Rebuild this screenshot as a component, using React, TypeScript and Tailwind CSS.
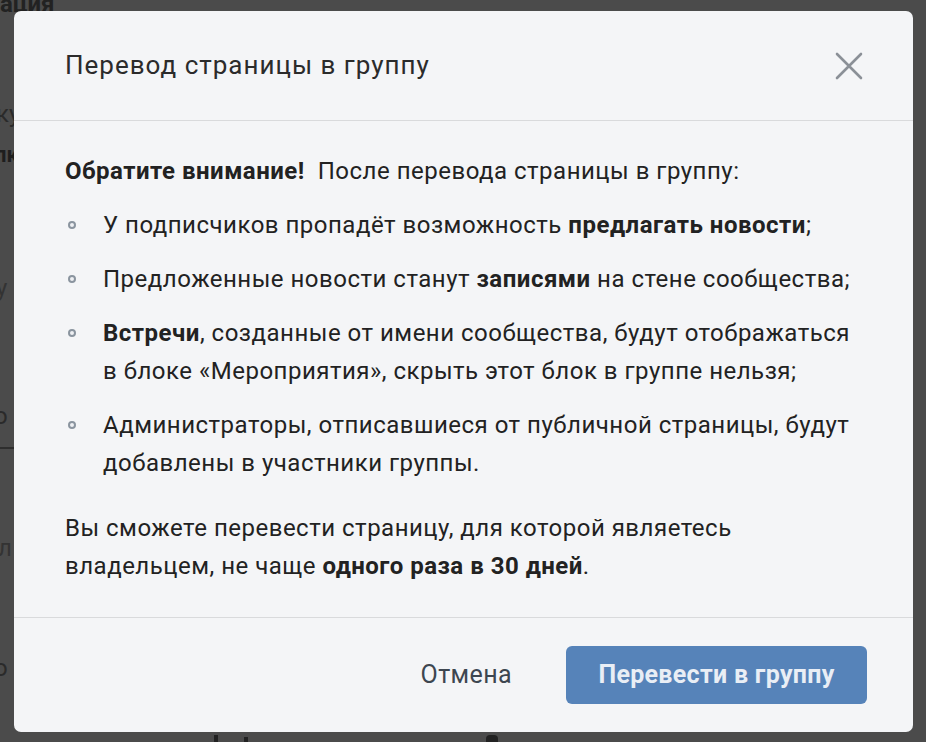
import { ReactNode } from "react";

function Bullet({ children }: { children: ReactNode }) {
  return (
    <li className="flex items-start mt-4">
      <span className="w-[38px] h-[38px] flex items-center shrink-0">
        <span className="ml-[3px] w-[8px] h-[8px] rounded-full border-2 border-[#8a949f] bg-[#eef0f3]" />
      </span>
      <span>{children}</span>
    </li>
  );
}

export default function App() {
  return (
    <div className="relative w-[926px] h-[742px] overflow-hidden bg-[#4b4b4b]" style={{ fontFamily: "Roboto, 'Liberation Sans', sans-serif" }}>
      {/* page content behind the overlay */}
      <div className="absolute left-0 top-[-14px] text-[24px] font-bold text-[#222]">ация</div>
      <div className="absolute left-[-4px] top-[96px] text-[24px] text-[#2a2a2a]">ку</div>
      <div className="absolute left-[-6px] top-[138px] text-[22px] font-bold text-[#1e1e1e]">лк</div>
      <div className="absolute left-[-4px] top-[270px] text-[24px] text-[#333]">у</div>
      <div className="absolute left-[-6px] top-[398px] text-[24px] text-[#2a2a2a]">о</div>
      <div className="absolute left-0 top-[447px] w-[14px] h-[2px] bg-[#2e2e2e]" />
      <div className="absolute left-[-2px] top-[530px] text-[24px] text-[#333]">л</div>
      <div className="absolute left-[-6px] top-[650px] text-[24px] text-[#2a2a2a]">о</div>
      <div className="absolute left-[214px] top-[735px] w-[4px] h-[8px] bg-[#222]" />
      <div className="absolute left-[244px] top-[737px] w-[4px] h-[6px] bg-[#222]" />
      <div className="absolute left-[486px] top-[735px] w-[12px] h-[8px] rounded-t bg-[#222]" />

      <div className="absolute left-[14px] top-[11px] w-[899px] h-[721px] rounded-[7px] bg-[#f4f5f7] flex flex-col text-[#222]">
        <div className="h-[110px] shrink-0 flex items-center justify-between pl-[51px] pr-[50px] border-b border-[#d9dadc]">
          <h2 className="text-[26px] text-[#2b2b2b] tracking-[1px]">Перевод страницы в группу</h2>
          <button aria-label="Закрыть" className="w-[28px] h-[28px] flex items-center justify-center">
            <svg width="28" height="28" viewBox="0 0 28 28" fill="none" stroke="#8b9097" strokeWidth="2.6" strokeLinecap="round">
              <path d="M2 2 L26 26 M26 2 L2 26" />
            </svg>
          </button>
        </div>

        <div className="flex-1 pl-[51px] pr-[30px] pt-[31px] text-[24px] tracking-[0.5px] leading-[38px] text-[#222]">
          <p>
            <b className="font-bold">Обратите внимание!</b>&nbsp; После перевода страницы в группу:
          </p>
          <ul>
            <Bullet>
              У подписчиков пропадёт возможность <b className="font-bold">предлагать новости</b>;
            </Bullet>
            <Bullet>
              Предложенные новости станут <b className="font-bold">записями</b> на стене сообщества;
            </Bullet>
            <Bullet>
              <b className="font-bold">Встречи</b>, созданные от имени сообщества, будут отображаться
              <br />в блоке «Мероприятия», скрыть этот блок в группе нельзя;
            </Bullet>
            <Bullet>
              Администраторы, отписавшиеся от публичной страницы, будут
              <br />добавлены в участники группы.
            </Bullet>
          </ul>
          <p className="mt-[27px]">
            Вы сможете перевести страницу, для которой являетесь
            <br />владельцем, не чаще <b className="font-bold">одного раза в 30 дней</b>.
          </p>
        </div>

        <div className="h-[115px] shrink-0 border-t border-[#d9dadc] flex items-center justify-end pr-[46px] gap-[54px]">
          <button className="text-[25px] tracking-[0.4px] text-[#3d4650]">Отмена</button>
          <button className="w-[301px] h-[58px] rounded-[6px] bg-[#5683b9] text-[25px] tracking-[0.3px] font-bold text-[#e9eef5]">
            Перевести в группу
          </button>
        </div>
      </div>
    </div>
  );
}
